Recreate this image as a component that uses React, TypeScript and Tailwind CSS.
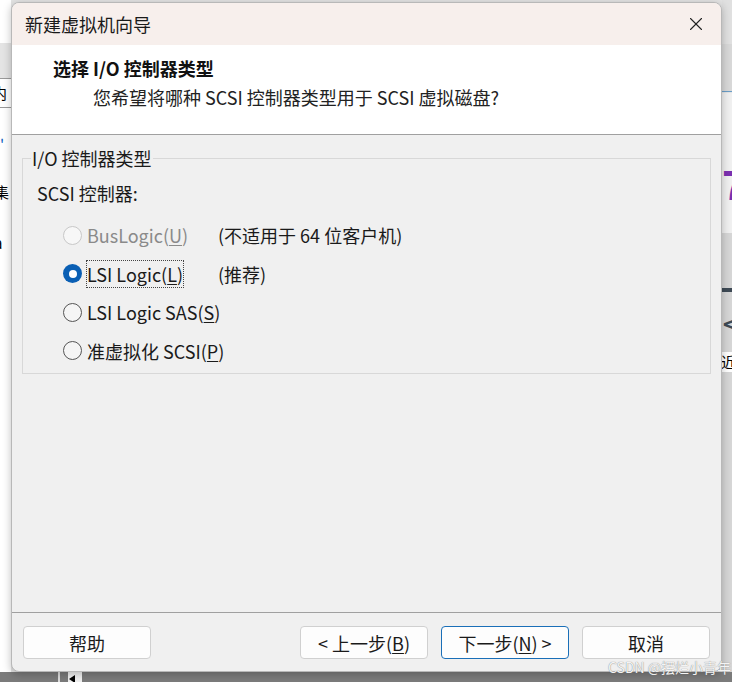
import { X } from 'lucide-react';

const font = { fontFamily: '"Noto Sans CJK SC", "Noto Sans", sans-serif' };

function Radio({ checked, disabled }: { checked?: boolean; disabled?: boolean }) {
  if (checked) {
    return (
      <span className="w-[19px] h-[19px] rounded-full bg-[#0a5fb4] flex items-center justify-center shrink-0">
        <span className="w-[8px] h-[8px] rounded-full bg-white" />
      </span>
    );
  }
  return (
    <span
      className={
        'w-[19px] h-[19px] rounded-full border shrink-0 ' +
        (disabled ? 'border-[#c8c8c8] bg-[#f7f7f7]' : 'border-[#555] bg-[#f5f5f5]')
      }
    />
  );
}

function Option({
  label,
  hot,
  rest,
  note,
  checked,
  disabled,
}: {
  label: string;
  hot: string;
  rest: string;
  note?: string;
  checked?: boolean;
  disabled?: boolean;
}) {
  return (
    <div className="flex items-center h-[38.5px] whitespace-nowrap">
      <Radio checked={checked} disabled={disabled} />
      <span
        className={
          'ml-[5px] min-w-[131px] shrink-0 text-[18px] leading-[22px] ' +
          (disabled ? 'text-[#8a8a8a]' : 'text-[#1a1a1a]')
        }
      >
        <span className={checked ? 'outline outline-1 outline-dotted outline-[#444]' : ''}>
          {label}
          <span className="underline underline-offset-2">{hot}</span>
          {rest}
        </span>
      </span>
      {note && <span className="text-[18px] leading-[22px] text-[#1a1a1a]">{note}</span>}
    </div>
  );
}

function Button({ children, primary }: { children: React.ReactNode; primary?: boolean }) {
  return (
    <button
      className={
        'w-[128px] h-[33px] rounded-[4px] bg-[#fdfdfd] text-[18px] leading-[22px] text-[#1a1a1a] flex items-center justify-center border whitespace-nowrap ' +
        (primary ? 'border-[#1a6fb8]' : 'border-[#d0d0d0]')
      }
    >
      {children}
    </button>
  );
}

export default function App() {
  return (
    <div className="relative w-[732px] h-[682px] overflow-hidden bg-[#e4e4e4]" style={font}>
      {/* background window bits */}
      <div className="absolute left-0 top-0 w-[11px] h-[43px] bg-white" />
      <div className="absolute left-0 top-[78px] w-[11px] h-[30px] border-y border-[#9a9a9a] bg-white text-[15px] leading-[28px] overflow-hidden">
        <span className="-ml-[8px]">内</span>
      </div>
      <div className="absolute left-0 top-[108px] w-[11px] h-[564px] bg-white text-[15px] overflow-hidden">
        <div className="mt-[28px] text-[#1060c0] leading-none">'</div>
        <div className="mt-[30px] -ml-[6px]">集</div>
        <div className="mt-[28px] -ml-[6px]">a</div>
      </div>
      <div className="absolute left-[722px] top-0 w-[10px] h-[44px] bg-[#e0e0e0]" />
      <div className="absolute left-[722px] top-[44px] w-[10px] h-[48px] bg-[#d8d8d8] border-b border-[#6a9ec8]" />
      <div className="absolute left-[722px] top-[93px] w-[10px] h-[140px] bg-[#f0f0f0] overflow-hidden">
        <div className="mt-[70px] text-[#7a30b0] font-bold text-[40px] leading-none">7</div>
      </div>
      <div className="absolute left-[722px] top-[233px] w-[10px] h-[440px] bg-[#d6d6d6] overflow-hidden">
        <div className="mt-[55px] h-[4px] w-[10px] bg-[#3e4a55]" />
        <div className="mt-[20px] ml-[1px] text-[#3e4a55] font-bold text-[22px] leading-none">&lt;</div>
        <div className="mt-[18px] -ml-[1px] text-[15px] bg-white leading-[20px]">近</div>
      </div>
      <div className="absolute left-0 top-[672px] w-[732px] h-[10px] bg-[#7b7b7b]">
        <div className="absolute left-[58px] top-0 w-[2px] h-[10px] bg-[#ddd]" />
        <div className="absolute left-[68px] top-0 w-[14px] h-[10px] bg-[#f0f0f0]" />
        <div className="absolute left-[69px] top-[3px] w-0 h-0 border-y-[4px] border-y-transparent border-r-[6px] border-r-black" />
      </div>

      {/* dialog */}
      <div className="absolute left-[11px] top-[2px] w-[711px] h-[670px] rounded-[8px] border border-[#b8b8b8] bg-[#f0f0f0] overflow-hidden flex flex-col shadow-[0_2px_8px_rgba(0,0,0,0.25)]">
        <div className="h-[42px] bg-[#f7efec] flex items-center justify-between shrink-0">
          <span className="ml-[13px] text-[18px] leading-[24px] text-[#1a1a1a]">新建虚拟机向导</span>
          <X className="mr-[14px] w-[22px] h-[22px] text-[#222]" strokeWidth={1.2} />
        </div>
        <div className="h-[90px] bg-white border-b border-[#a0a0a0] shrink-0 pl-[41px] pt-[11px]">
          <div className="text-[18px] font-bold text-[#111] leading-[24px]">选择 I/O 控制器类型</div>
          <div className="ml-[40px] mt-[5px] text-[18px] text-[#222] leading-[24px]">
            您希望将哪种 SCSI 控制器类型用于 SCSI 虚拟磁盘?
          </div>
        </div>
        <div className="flex-1 px-[10px] pt-[12px]">
          <fieldset className="border border-[#d8d8d8] h-[227px] pl-[14px] pr-[10px] m-0 pt-0 pb-0">
            <legend className="text-[18px] text-[#1a1a1a] px-[1px] -ml-[6px] leading-[22px]">I/O 控制器类型</legend>
            <div className="text-[18px] text-[#1a1a1a] mt-[13px] leading-[22px]">SCSI 控制器:</div>
            <div className="ml-[26px] mt-[12px] flex flex-col">
              <Option label="BusLogic(" hot="U" rest=")" note="(不适用于 64 位客户机)" disabled />
              <Option label="LSI Logic(" hot="L" rest=")" note="(推荐)" checked />
              <Option label="LSI Logic SAS(" hot="S" rest=")" />
              <Option label="准虚拟化 SCSI(" hot="P" rest=")" />
            </div>
          </fieldset>
        </div>
        <div className="h-[59px] border-t border-[#a0a0a0] shrink-0 flex items-start pt-[13px] px-[11px]">
          <Button>帮助</Button>
          <div className="ml-auto flex gap-[13px]">
            <Button>
              &lt; 上一步(<span className="underline underline-offset-2">B</span>)
            </Button>
            <Button primary>
              下一步(<span className="underline underline-offset-2">N</span>) &gt;
            </Button>
            <Button>取消</Button>
          </div>
        </div>
      </div>
      <div className="absolute left-[608px] top-[659px] text-[14px] text-[#f4f4f4] leading-[16px] [text-shadow:0_0_1px_#666]">
        CSDN @摆烂小青年
      </div>
    </div>
  );
}
